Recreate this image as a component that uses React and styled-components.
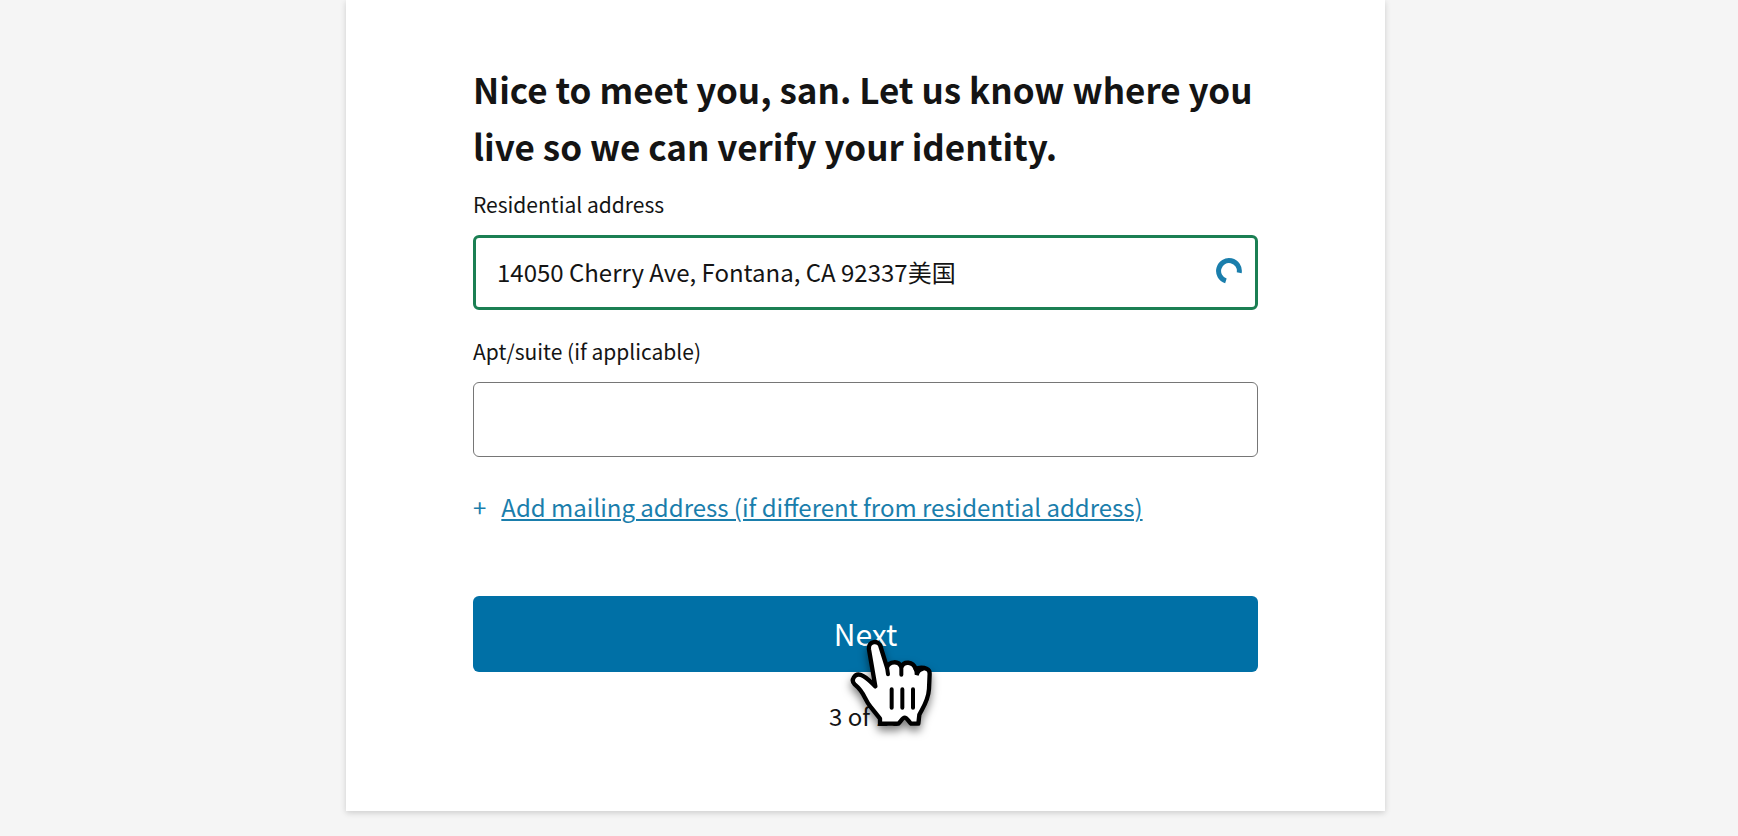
import { useState } from "react";
import styled, { createGlobalStyle } from "styled-components";

const GlobalStyle = createGlobalStyle`
  *,
  *::before,
  *::after {
    box-sizing: border-box;
  }
  body {
    margin: 0;
    background-color: #f5f5f5;
    color: #141414;
    font-family: "Noto Sans CJK SC", "Noto Sans", sans-serif;
  }
`;

const Page = styled.main`
  display: flex;
  justify-content: center;
  min-height: 100vh;
  padding: 0 7px 24px 0;
`;

const Card = styled.form`
  display: flex;
  flex-direction: column;
  align-self: flex-start;
  width: 100%;
  max-width: 1039px;
  padding: 60px 127px 77px;
  background-color: #fff;
  box-shadow: 0 2px 6px rgba(0, 0, 0, 0.16);
  @media screen and (max-width: 50em) {
    padding: 40px 24px;
  }
`;

const Title = styled.h1`
  margin: 0 0 15px;
  font-size: 35px;
  font-weight: 700;
  line-height: 57px;
`;

const Field = styled.div`
  display: flex;
  flex-direction: column;
  gap: 16px;
  margin-bottom: ${(props) => (props.$last ? "32px" : "26px")};
`;

const Label = styled.label`
  font-size: 21px;
  line-height: 30px;
`;

const InputBox = styled.div`
  display: flex;
  align-items: center;
  height: 75px;
  padding: 0 13px 3px 0;
  border: ${(props) =>
    props.$active ? "3px solid #1b7f53" : "1px solid #767676"};
  border-radius: 6px;
  background-color: #fff;
`;

const Input = styled.input`
  flex: 1;
  min-width: 0;
  height: 100%;
  padding: 0 21px;
  border: none;
  outline: none;
  background: transparent;
  color: inherit;
  font-family: inherit;
  font-size: 24px;
`;

const MailingRow = styled.div`
  display: flex;
  gap: 15px;
  margin-bottom: 71px;
  color: #1a7eac;
  font-size: 24px;
  line-height: 36px;
`;

const MailingLink = styled.a`
  color: inherit;
  text-decoration: underline;
  text-decoration-thickness: 2px;
  text-underline-offset: 2px;
`;

const NextArea = styled.div`
  position: relative;
  margin-bottom: 26px;
`;

const NextButton = styled.button`
  display: block;
  width: 100%;
  height: 76px;
  padding: 0 0 2px;
  border: none;
  border-radius: 6px;
  background-color: #0070a6;
  color: #fff;
  cursor: pointer;
  font-family: inherit;
  font-size: 30px;
`;

const Pointer = styled.svg`
  position: absolute;
  top: 43px;
  left: 50%;
  width: 84px;
  height: 90px;
  margin-left: -16px;
  overflow: visible;
  pointer-events: none;
  filter: drop-shadow(0 5px 4px rgba(0, 0, 0, 0.5));
`;

const Steps = styled.p`
  margin: 0;
  font-size: 24px;
  line-height: 36px;
  text-align: center;
`;

function Spinner() {
  return (
    <svg width="26" height="26" viewBox="0 0 26 26" fill="none" aria-hidden="true">
      <path
        d="M9.9 22.9A10.4 10.4 0 1 1 23.2 14.8"
        stroke="#1a7eac"
        strokeWidth="5"
      />
    </svg>
  );
}

function HandPointer() {
  return (
    <Pointer viewBox="150 150 252 270" aria-hidden="true">
      <path
        d="M226 292L207 182C203 154 237 152 242 174L261 235C268 216 296 214 304 234C311 216 339 216 347 240C356 235 371 235 381 240Q389 243 389 254L387 300C385 334 370 354 358 377L355 404H333C327 399 321 386 314 386C307 386 302 399 295 404H240V389L213 355C190 329 197 313 164 286C151 274 164 251 183 258C200 264 213 280 226 292Z"
        fill="#fff"
        stroke="#000"
        strokeWidth="13"
        strokeLinejoin="round"
      />
      <path
        d="M261 235L264 256M304 234V257M347 240Q351 248 350 258Q356 241 368 240M275 301V356M307 301V356M339 301V356"
        fill="none"
        stroke="#000"
        strokeWidth="12"
        strokeLinecap="round"
      />
    </Pointer>
  );
}

function App() {
  const [address, setAddress] = useState(
    "14050 Cherry Ave, Fontana, CA 92337美国"
  );
  const [suite, setSuite] = useState("");

  return (
    <>
      <GlobalStyle />
      <Page>
        <Card onSubmit={(e) => e.preventDefault()}>
          <Title>
            Nice to meet you, san. Let us know where you live so we can verify
            your identity.
          </Title>
          <Field>
            <Label htmlFor="address">Residential address</Label>
            <InputBox $active>
              <Input
                id="address"
                type="text"
                value={address}
                onChange={(e) => setAddress(e.target.value)}
              />
              <Spinner />
            </InputBox>
          </Field>
          <Field $last>
            <Label htmlFor="suite">Apt/suite (if applicable)</Label>
            <InputBox>
              <Input
                id="suite"
                type="text"
                value={suite}
                onChange={(e) => setSuite(e.target.value)}
              />
            </InputBox>
          </Field>
          <MailingRow>
            <span>+</span>
            <MailingLink href="#mailing">
              Add mailing address (if different from residential address)
            </MailingLink>
          </MailingRow>
          <NextArea>
            <NextButton type="submit">Next</NextButton>
            <HandPointer />
          </NextArea>
          <Steps>3 of 10</Steps>
        </Card>
      </Page>
    </>
  );
}

export default App;
